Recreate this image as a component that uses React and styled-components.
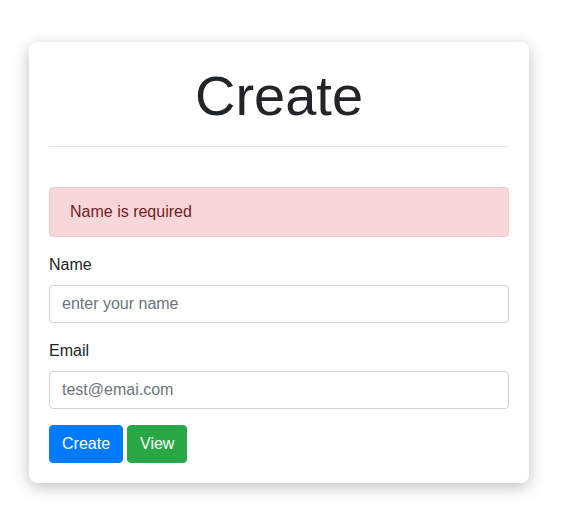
import React from "react";
import styled, { createGlobalStyle } from "styled-components";

const Global = createGlobalStyle`
  html, body { margin: 0; padding: 0; background: #fff; }
  body {
    font-family: "Liberation Sans", Arial, sans-serif;
    font-size: 16px;
    line-height: 1.5;
    color: #212529;
  }
  *, *::before, *::after { box-sizing: border-box; }
`;

const Page = styled.div`
  padding: 42px 50px 35px 29px;
`;

const Card = styled.div`
  width: 500px;
  background: #fff;
  border-radius: 8px;
  padding: 20px;
  box-shadow: 0 4px 16px rgba(0, 0, 0, 0.25);
`;

const Title = styled.h1`
  margin: 0;
  font-size: 56px;
  font-weight: 300;
  line-height: 1.2;
  text-align: center;
  color: #212529;
`;

const Divider = styled.hr`
  margin: 17px 0 0;
  border: 0;
  border-top: 1px solid rgba(0, 0, 0, 0.1);
`;

const Form = styled.form`
  margin-top: 40px;
`;

const Alert = styled.div`
  padding: 12px 20px;
  margin-bottom: 16px;
  border: 1px solid #f5c6cb;
  border-radius: 4px;
  background: #f8d7da;
  color: #721c24;
`;

const Group = styled.div`
  margin-bottom: 16px;
`;

const Label = styled.label`
  display: block;
  margin-bottom: 8px;
`;

const Input = styled.input`
  display: block;
  width: 100%;
  height: 38px;
  padding: 6px 12px;
  font-family: inherit;
  font-size: 16px;
  line-height: 1.5;
  color: #495057;
  background: #fff;
  border: 1px solid #ced4da;
  border-radius: 4px;
  outline: none;
  &::placeholder { color: #6c757d; opacity: 1; }
`;

const Actions = styled.div`
  display: flex;
  gap: 4px;
`;

const Button = styled.button`
  height: 38px;
  padding: 6px 12px;
  font-family: inherit;
  font-size: 16px;
  line-height: 1.5;
  color: #fff;
  border: 1px solid ${(p) => p.$bg};
  background: ${(p) => p.$bg};
  border-radius: 4px;
  cursor: pointer;
`;

export default function App() {
  return (
    <>
      <Global />
      <Page>
        <Card>
          <Title>Create</Title>
          <Divider />
          <Form onSubmit={(e) => e.preventDefault()}>
            <Alert>Name is required</Alert>
            <Group>
              <Label>Name</Label>
              <Input placeholder="enter your name" />
            </Group>
            <Group>
              <Label>Email</Label>
              <Input placeholder="test@emai.com" />
            </Group>
            <Actions>
              <Button $bg="#007bff">Create</Button>
              <Button $bg="#28a745">View</Button>
            </Actions>
          </Form>
        </Card>
      </Page>
    </>
  );
}
